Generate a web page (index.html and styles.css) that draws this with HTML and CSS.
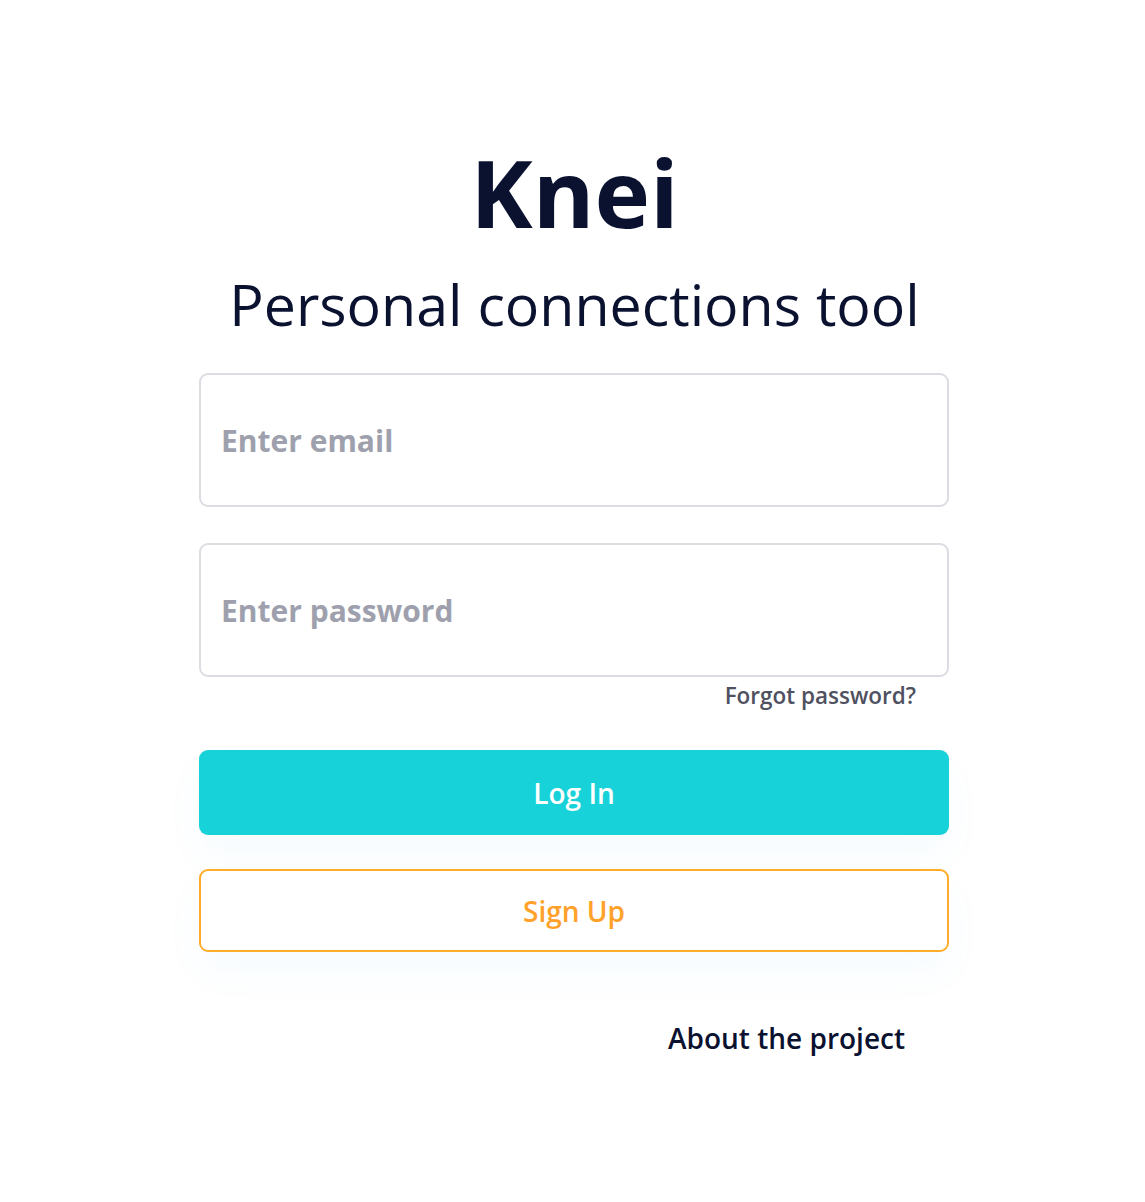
FILE: index.html
```html
<!DOCTYPE html>
<html>
<head>
<meta charset="utf-8">
<link rel="stylesheet" href="styles.css">
</head>
<body>
<main class="page">
  <h1 class="title">Knei</h1>
  <h2 class="subtitle">Personal connections tool</h2>
  <form class="form">
    <input class="field" type="email" placeholder="Enter email">
    <input class="field field-pass" type="password" placeholder="Enter password">
    <a class="forgot" href="#">Forgot password?</a>
    <button class="btn btn-login" type="button">Log In</button>
    <button class="btn btn-signup" type="button">Sign Up</button>
    <a class="about" href="#">About the project</a>
  </form>
</main>
</body>
</html>
```
FILE: styles.css
```css
html, body {
  margin: 0;
  padding: 0;
  background: #ffffff;
}
body {
  font-family: "Open Sans", "Noto Sans", sans-serif;
  color: #0a1230;
}
.page {
  display: flex;
  flex-direction: column;
  align-items: center;
  padding-top: 142px;
}
.title {
  margin: 0 0 0 4px;
  font-size: 94px;
  font-weight: 700;
  line-height: 100px;
  color: #0a1230;
}
.subtitle {
  margin: 22px 0 0 4px;
  font-size: 57.3px;
  font-weight: 400;
  line-height: 80px;
  color: #0a1230;
}
.form {
  width: 750px;
  margin-left: 3px;
  margin-top: 29px;
  display: flex;
  flex-direction: column;
}
.field {
  box-sizing: border-box;
  width: 100%;
  height: 134px;
  border: 2px solid #dcdce2;
  border-radius: 9px;
  padding: 0 20px;
  font-family: "Open Sans", sans-serif;
  font-size: 30px;
  font-weight: 700;
  color: #333;
  outline: none;
}
.field::placeholder {
  color: #9ea1ad;
  font-weight: 700;
  opacity: 1;
}
.field-pass {
  margin-top: 36px;
}
.forgot {
  align-self: flex-end;
  margin-right: 33px;
  margin-top: 3px;
  font-size: 22.5px;
  font-weight: 600;
  line-height: 32px;
  color: #4f5160;
  text-decoration: none;
}
.btn {
  box-sizing: border-box;
  width: 100%;
  border-radius: 9px;
  font-family: "Open Sans", sans-serif;
  font-size: 28px;
  font-weight: 600;
  cursor: pointer;
  box-shadow: 0 20px 40px rgba(24, 160, 220, 0.04);
}
.btn-login {
  margin-top: 38px;
  height: 85px;
  background: #18d2d9;
  border: none;
  color: #ffffff;
}
.btn-signup {
  margin-top: 34px;
  height: 83px;
  background: #ffffff;
  border: 2px solid #ffac2b;
  color: #ffa12a;
}
.about {
  align-self: flex-end;
  margin-right: 44px;
  margin-top: 66px;
  font-size: 28px;
  font-weight: 600;
  line-height: 40px;
  color: #0a1230;
  text-decoration: none;
}
```
